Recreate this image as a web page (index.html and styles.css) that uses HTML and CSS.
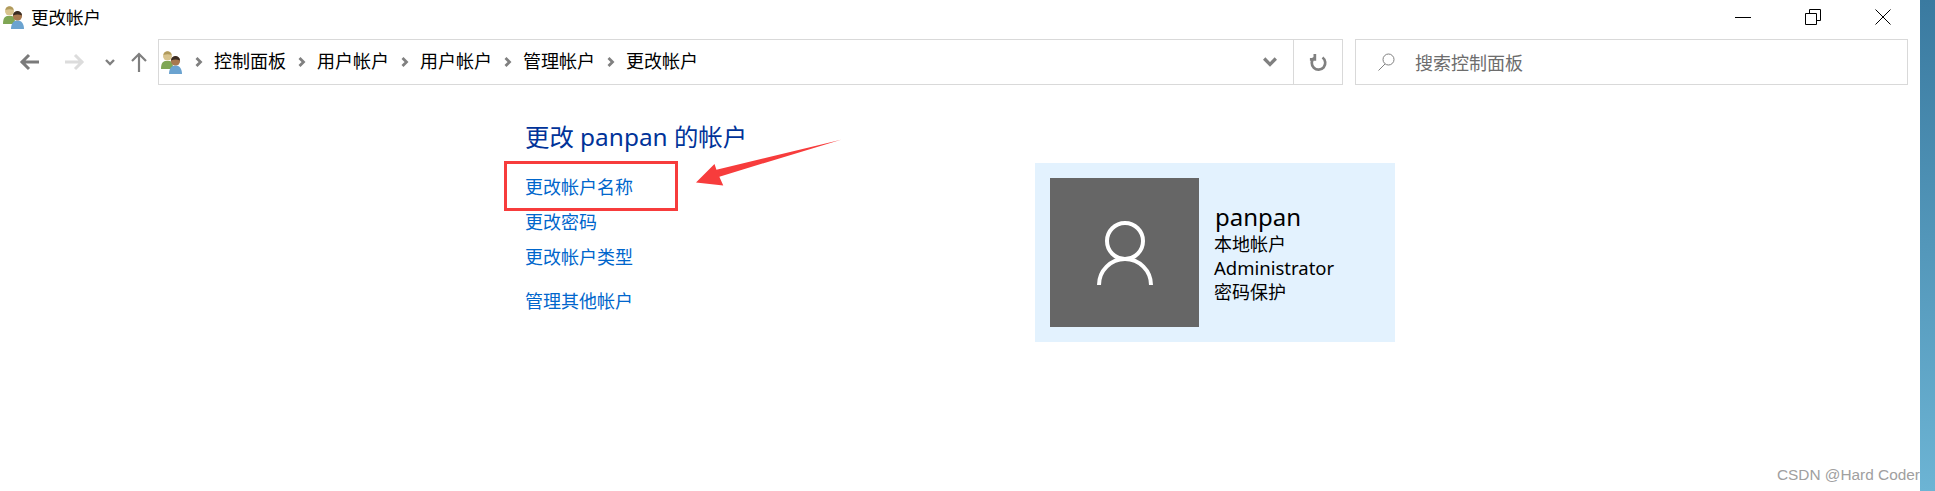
FILE: index.html
```html
<!DOCTYPE html>
<html lang="zh-CN">
<head>
    <meta charset="UTF-8">
    <title>更改帐户</title>
    <link rel="stylesheet" href="styles.css">
</head>
<body>
    <div class="window">
        <div class="titlebar">
            <svg class="users-icon" viewBox="0 0 24 24"><use href="#users"></use></svg>
            <span class="title">更改帐户</span>
            <div class="win-buttons">
                <svg viewBox="0 0 16 16"><path d="M0 8.5h16" stroke="#000" fill="none"/></svg>
                <svg viewBox="0 0 16 16"><path d="M.5 4.5h11v11H.5zM4.500 4.500v-4h11v11h-4" stroke="#000" fill="none"/></svg>
                <svg viewBox="0 0 16 16"><path d="M.5.5l15 15M15.5.5l-15 15" stroke="#000" fill="none"/></svg>
            </div>
        </div>
        <div class="navbar">
            <div class="nav-arrows">
                <svg class="arrow" viewBox="0 0 20 20"><path d="M20 10H2M10 3l-7 7 7 7" stroke="#7a7a7a" stroke-width="3" fill="none"/></svg>
                <svg class="arrow" viewBox="0 0 20 20"><path d="M0 10h18M10 3l7 7-7 7" stroke="#dcdcdc" stroke-width="3" fill="none"/></svg>
                <svg class="caret" viewBox="0 0 10 10"><path d="M1 3l4 4 4-4" stroke="#808080" stroke-width="2.4" fill="none"/></svg>
                <svg class="arrow up" viewBox="0 0 20 20"><path d="M10 20V2M3 9l7-7 7 7" stroke="#7f7f7f" stroke-width="2.2" fill="none"/></svg>
            </div>
            <div class="address">
                <svg class="users-icon crumb-icon" viewBox="0 0 24 24"><use href="#users"></use></svg>
                <svg class="sep first" viewBox="0 0 8 10"><path d="M1.5 1l4 4-4 4" stroke="#808080" stroke-width="2.8" fill="none"/></svg>
                <span class="crumb">控制面板</span>
                <svg class="sep" viewBox="0 0 8 10"><path d="M1.5 1l4 4-4 4" stroke="#808080" stroke-width="2.8" fill="none"/></svg>
                <span class="crumb">用户帐户</span>
                <svg class="sep" viewBox="0 0 8 10"><path d="M1.5 1l4 4-4 4" stroke="#808080" stroke-width="2.8" fill="none"/></svg>
                <span class="crumb">用户帐户</span>
                <svg class="sep" viewBox="0 0 8 10"><path d="M1.5 1l4 4-4 4" stroke="#808080" stroke-width="2.8" fill="none"/></svg>
                <span class="crumb">管理帐户</span>
                <svg class="sep" viewBox="0 0 8 10"><path d="M1.5 1l4 4-4 4" stroke="#808080" stroke-width="2.8" fill="none"/></svg>
                <span class="crumb">更改帐户</span>
                <div class="address-end">
                    <svg class="drop" viewBox="0 0 12 10"><path d="M1 2l5 5 5-5" stroke="#808080" stroke-width="2.8" fill="none"/></svg>
                    <div class="refresh">
                        <svg viewBox="0 0 20 20"><path d="M5.5 5.500A7.500 7.500 0 1 0 15 5M6.500 1v6H1" stroke="#808080" stroke-width="3" fill="none"/></svg>
                    </div>
                </div>
            </div>
            <div class="search">
                <svg viewBox="0 0 18 18"><circle cx="11.5" cy="6.5" r="5.5" stroke="#808080" fill="none"/><path d="M8 11l-6.500 6.500" stroke="#808080" fill="none"/></svg>
                <span>搜索控制面板</span>
            </div>
        </div>
        <div class="content">
            <div class="tasks">
                <h1>更改 panpan 的帐户</h1>
                <a class="link">更改帐户名称</a>
                <a class="link">更改密码</a>
                <a class="link">更改帐户类型</a>
                <a class="link other">管理其他帐户</a>
            </div>
            <div class="card">
                <div class="avatar">
                    <svg viewBox="0 0 56 64"><circle cx="28" cy="20" r="18" fill="none" stroke="#fff" stroke-width="4"/><path d="M2 64a26 26 0 0 1 52 0" fill="none" stroke="#fff" stroke-width="4"/></svg>
                </div>
                <div class="info">
                    <div class="name">panpan</div>
                    <div>本地帐户</div>
                    <div class="role">Administrator</div>
                    <div>密码保护</div>
                </div>
            </div>
        </div>
        <div class="mark-box"></div>
        <svg class="mark-arrow" viewBox="0 0 150 50"><path d="M0 44L19 25 21 31 149 0 24 38 28 47z" fill="#f73c3c"/></svg>
        <div class="watermark">CSDN @Hard Coder</div>
    </div>
    <div class="desktop-edge"></div>

    <svg class="defs" width="0" height="0">
        <symbol id="users" viewBox="0 0 24 24">
            <path d="M1 19c0-6 2-8 5-8h3c3 0 4 2 4 8z" fill="#7fa654"/>
            <circle cx="7.5" cy="6" r="4.5" fill="#d8c48e"/>
            <path d="M3.5 5c0-5 8-5 8 0-3-1-5-1-8 0z" fill="#b09a5c"/>
            <path d="M9 24c0-6 3-8.500 6.500-8.500s6.500 2.500 6.500 8.500z" fill="#6ba3d0"/>
            <circle cx="15.5" cy="11" r="4.6" fill="#a8784e"/>
            <path d="M11 10.500c0-6 9-6 9 0-3-1.500-6-1.500-9 0z" fill="#3a2c22"/>
        </symbol>
    </svg>
</body>
</html>
```

FILE: styles.css
```css
* {
    box-sizing: border-box;
}
body {
    margin: 0;
    height: 491px;
    overflow: hidden;
    display: flex;
    background: #fff;
    color: #000;
    font-family: "Noto Sans", "Noto Sans CJK SC", sans-serif;
}
.window {
    position: relative;
    flex: 1;
}
.desktop-edge {
    width: 15px;
    background: linear-gradient(#3a7aa0, #6cb4d4);
}
.defs {
    position: absolute;
}
.titlebar {
    display: flex;
    align-items: center;
    height: 33px;
    padding-left: 2px;
}
.users-icon {
    width: 24px;
    height: 24px;
}
.title {
    margin-left: 5px;
    font-size: 17.5px;
}
.win-buttons {
    margin-left: auto;
    display: flex;
    align-items: center;
    gap: 54px;
    padding-right: 29px;
}
.win-buttons svg {
    width: 16px;
    height: 16px;
}
.navbar {
    display: flex;
    align-items: center;
    height: 46px;
    margin-top: 6px;
    padding-right: 12px;
}
.nav-arrows {
    display: flex;
    align-items: center;
    width: 158px;
    padding-left: 19px;
}
.arrow {
    width: 20px;
    height: 20px;
    margin-right: 26px;
}
.caret {
    width: 10px;
    height: 10px;
    margin-left: -6px;
    margin-right: 14px;
}
.up {
    margin-right: 0;
}
.address {
    display: flex;
    align-items: center;
    width: 1185px;
    height: 46px;
    border: 1px solid #d9d9d9;
    padding-left: 1px;
}
.crumb-icon {
    flex: none;
}
.sep {
    width: 8px;
    height: 10px;
    margin: 0 11px 0 12px;
}
.sep.first {
    margin-left: 11px;
}
.crumb {
    font-size: 18px;
    line-height: 24px;
    margin-top: -2px;
}
.address-end {
    margin-left: auto;
    display: flex;
    align-items: center;
    height: 100%;
}
.drop {
    width: 14px;
    height: 12px;
    margin-right: 16px;
}
.refresh {
    display: flex;
    align-items: center;
    justify-content: center;
    width: 49px;
    height: 100%;
    border-left: 1px solid #d9d9d9;
}
.refresh svg {
    width: 18px;
    height: 20px;
}
.search {
    display: flex;
    align-items: center;
    width: 553px;
    height: 46px;
    margin-left: 12px;
    border: 1px solid #d9d9d9;
    padding-left: 21px;
    color: #6d6d6d;
    font-size: 18px;
}
.search svg {
    width: 18px;
    height: 18px;
    margin-right: 20px;
}
.content {
    display: flex;
    padding: 34px 0 0 525px;
}
.tasks {
    width: 510px;
    display: flex;
    flex-direction: column;
}
h1 {
    margin: 0 0 15px;
    font-size: 24.4px;
    font-weight: 400;
    line-height: 36px;
    color: #003399;
}
.link {
    height: 35px;
    line-height: 35px;
    font-size: 18px;
    color: #0066cc;
}
.other {
    margin-top: 9px;
}
.card {
    display: flex;
    align-items: center;
    width: 360px;
    height: 179px;
    margin-top: 44px;
    padding: 0 15px;
    background: #e3f2fe;
}
.avatar {
    display: flex;
    align-items: center;
    justify-content: center;
    width: 149px;
    height: 149px;
    background: #666;
}
.avatar svg {
    width: 56px;
    height: 64px;
}
.info {
    margin-left: 15px;
    font-size: 18px;
    line-height: 24px;
}
.name {
    margin-left: 1px;
    font-size: 24px;
    line-height: 30px;
}
.role {
    font-size: 18.5px;
}
.mark-box {
    position: absolute;
    left: 504px;
    top: 161px;
    width: 174px;
    height: 50px;
    border: 3px solid #f73c3c;
}
.mark-arrow {
    position: absolute;
    left: 696px;
    top: 139px;
    width: 146px;
    height: 50px;
}
.watermark {
    position: absolute;
    right: 0;
    top: 466px;
    font-family: "Liberation Sans", sans-serif;
    font-size: 15.4px;
    color: #a0a0a0;
}
```
